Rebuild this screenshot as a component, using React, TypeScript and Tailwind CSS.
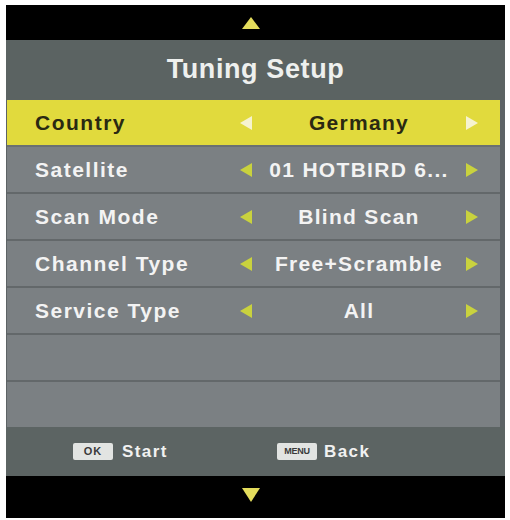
import React from "react";

const font = { fontFamily: '"Liberation Sans", Arial, sans-serif' };

function LeftArrow({ color }: { color: string }) {
  return (
    <svg width="14" height="16" viewBox="0 0 14 16">
      <polygon points="13,1 13,15 1,8" fill={color} />
    </svg>
  );
}
function RightArrow({ color }: { color: string }) {
  return (
    <svg width="14" height="16" viewBox="0 0 14 16">
      <polygon points="1,1 1,15 13,8" fill={color} />
    </svg>
  );
}

type Row = { label: string; value: string; active?: boolean };

const rows: Row[] = [
  { label: "Country", value: "Germany", active: true },
  { label: "Satellite", value: "01 HOTBIRD 6..." },
  { label: "Scan Mode", value: "Blind Scan" },
  { label: "Channel Type", value: "Free+Scramble" },
  { label: "Service Type", value: "All" },
];

export default function App() {
  return (
    <div className="w-[510px] h-[520px] bg-white pt-[5px] pl-[6px]" style={font}>
      <div className="w-[499px] flex flex-col">
        <div className="h-[35px] bg-black flex items-start pl-[236px] pt-[12px]">
          <svg width="18" height="12" viewBox="0 0 18 12">
            <polygon points="9,0 18,12 0,12" fill="#e3dc5c" />
          </svg>
        </div>
        <div className="h-[60px] bg-[#5b6362] flex items-center justify-center pb-[2px]">
          <span className="text-[27px] font-bold text-[#eef0ee] tracking-[0.6px]">Tuning Setup</span>
        </div>
        <div className="bg-[#5d6365] pl-[1px] pr-[5px] flex flex-col">
          {rows.map((r) => (
            <div
              key={r.label}
              className={`h-[47px] flex items-center border-b-2 ${
                r.active
                  ? "bg-[#e1da3d] border-[#6a7072]"
                  : "bg-[#7b8083] border-[#63686a]"
              }`}
            >
              <div
                className={`w-[232px] pl-[28px] text-[21px] font-bold tracking-[1.5px] ${
                  r.active ? "text-[#2a2912]" : "text-[#f3f3f3]"
                }`}
              >
                {r.label}
              </div>
              <LeftArrow color={r.active ? "#f6f3cf" : "#c9d23e"} />
              <div
                className={`flex-1 text-center text-[21px] font-bold tracking-[1.3px] whitespace-nowrap ${
                  r.active ? "text-[#2a2912]" : "text-[#f3f3f3]"
                }`}
              >
                {r.value}
              </div>
              <RightArrow color={r.active ? "#f6f3cf" : "#c9d23e"} />
              <div className="w-[21px]" />
            </div>
          ))}
          <div className="h-[47px] bg-[#7b8083] border-b-2 border-[#63686a]" />
          <div className="h-[45px] bg-[#7b8083]" />
        </div>
        <div className="h-[49px] bg-[#5c6463] flex items-center pl-[67px]">
          <div className="w-[204px] flex items-center gap-[9px]">
            <span className="w-[40px] h-[17px] bg-[#e2e4e2] rounded-[2px] flex items-center justify-center text-[11px] font-bold text-[#3a3a3a] tracking-[1px]">
              OK
            </span>
            <span className="text-[17px] font-bold text-[#f1f1f1] tracking-[1.4px]">Start</span>
          </div>
          <div className="flex items-center gap-[7px]">
            <span className="w-[40px] h-[17px] bg-[#e2e4e2] rounded-[2px] flex items-center justify-center text-[9px] font-bold text-[#3a3a3a] tracking-[-0.3px]">
              MENU
            </span>
            <span className="text-[17px] font-bold text-[#f1f1f1] tracking-[1.4px]">Back</span>
          </div>
        </div>
        <div className="h-[42px] bg-black flex items-start pl-[236px] pt-[12px]">
          <svg width="18" height="14" viewBox="0 0 18 14">
            <polygon points="0,0 18,0 9,14" fill="#e3dc5c" />
          </svg>
        </div>
      </div>
    </div>
  );
}
